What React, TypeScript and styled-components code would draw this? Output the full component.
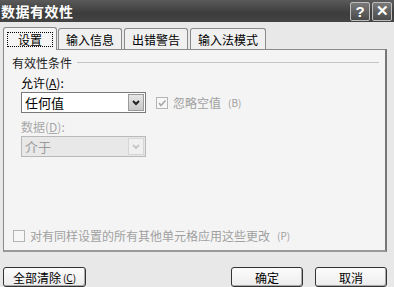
import React from "react";
import styled, { createGlobalStyle } from "styled-components";

const Global = createGlobalStyle`
  html, body { margin: 0; padding: 0; }
  body {
    width: 394px; height: 287px; overflow: hidden;
    background: #e8e8e8;
    font-family: "Noto Sans CJK SC", "Liberation Sans", sans-serif;
    font-size: 12px; color: #000;
  }
`;

const Dialog = styled.div`
  width: 394px; height: 287px;
  display: flex; flex-direction: column;
  background: #e8e8e8;
`;

const TitleBar = styled.div`
  height: 22px; box-sizing: border-box;
  display: flex; align-items: center; justify-content: space-between;
  padding: 0 2px 0 1px;
  background: linear-gradient(#5a5a5a, #3c3c3c 60%, #444);
`;

const Title = styled.div`
  color: #fff; font-weight: bold; font-size: 14px; letter-spacing: 0.5px;
  line-height: 22px;
`;

const TitleButtons = styled.div`
  display: flex; gap: 2px;
`;

const TitleBtn = styled.div`
  width: 20px; height: 19px; box-sizing: border-box;
  border: 1px solid #bdbdbd; border-radius: 2px;
  background: linear-gradient(#7a7a7a, #4a4a4a);
  color: #fff; display: flex; align-items: center; justify-content: center;
  font-family: "Liberation Sans", sans-serif; font-weight: bold; font-size: 15px;
`;

const Body = styled.div`
  flex: 1; display: flex; flex-direction: column;
  padding: 4px 7px 0 3px;
`;

const Tabs = styled.div`
  display: flex; align-items: flex-end; height: 23px;
  position: relative; z-index: 1;
`;

const Tab = styled.div<{ $active?: boolean }>`
  box-sizing: border-box;
  height: ${(p) => (p.$active ? "23px" : "21px")};
  margin-right: ${(p) => (p.$active ? "1px" : "2px")};
  padding: 0 ${(p) => (p.$active ? "3px" : "7px")};
  border: 1px solid #8a8a8a; border-bottom: none;
  border-radius: 3px 3px 0 0;
  background: ${(p) => (p.$active ? "#f4f4f4" : "#f0f0f0")};
  display: flex; align-items: center;
  margin-bottom: ${(p) => (p.$active ? "-1px" : "0")};
  font-size: 12px;
`;

const Focus = styled.span`
  border: 1px dotted #000; padding: 0 10px; line-height: 13px; display: inline-block;
`;

const Panel = styled.div`
  box-sizing: border-box;
  height: 203px;
  background: #f4f4f4;
  border: 1px solid #8a8a8a;
  border-right: 2px solid #777;
  border-bottom: 2px solid #999;
  display: flex; flex-direction: column;
  padding: 5px 6px 0 8px;
`;

const GroupHead = styled.div`
  display: flex; align-items: center; gap: 5px; height: 14px;
  color: #222;
`;

const GroupLine = styled.div`
  flex: 1; height: 1px; background: #c4c4c4;
`;

const Row = styled.div`
  display: flex; align-items: center; padding-left: 9px;
`;

const Label = styled.div<{ $disabled?: boolean }>`
  padding-left: 9px; margin-top: 8px; line-height: 12px;
  color: ${(p) => (p.$disabled ? "#a8a8a8" : "#000")};
  display: flex; align-items: center;
`;

const Select = styled.div<{ $disabled?: boolean }>`
  width: 125px; height: 21px; box-sizing: border-box;
  border: 1px solid ${(p) => (p.$disabled ? "#b8b8b8" : "#7a7a7a")};
  background: ${(p) => (p.$disabled ? "#e8e8e8" : "#fff")};
  display: flex; align-items: center; justify-content: space-between;
  padding: 0 1px 0 3px; margin-top: 3px;
  font-size: 13px;
  color: ${(p) => (p.$disabled ? "#9a9a9a" : "#000")};
`;

const DropBtn = styled.div<{ $disabled?: boolean }>`
  width: 16px; height: 17px; box-sizing: border-box;
  border: 1px solid ${(p) => (p.$disabled ? "#d6d6d6" : "#9a9a9a")};
  background: ${(p) => (p.$disabled ? "#f0f0f0" : "linear-gradient(#e6e6e6, #c8c8c8)")};
  display: flex; align-items: center; justify-content: center;
`;

const CheckWrap = styled.div<{ $disabled?: boolean; $m?: string }>`
  display: flex; align-items: center; gap: 5px;
  margin: ${(p) => p.$m || "0"};
  color: ${(p) => (p.$disabled ? "#a0a0a0" : "#000")};
`;

const Box = styled.div`
  width: 12px; height: 12px; box-sizing: border-box;
  border: 1px solid #b4b4b4; background: #f7f7f7;
  display: flex; align-items: center; justify-content: center;
`;

const Spacer = styled.div`flex: 1;`;

const Footer = styled.div`
  display: flex; align-items: center; padding: 9px 7px 0 3px;
`;

const Button = styled.div<{ $w: number }>`
  width: ${(p) => p.$w}px; height: 20px; box-sizing: border-box;
  border: 1px solid #333; border-radius: 3px;
  background: linear-gradient(#fcfcfc, #ececec);
  box-shadow: inset -1px -1px 0 #aaa;
  display: flex; align-items: center; justify-content: center;
  font-size: 12px;
`;

const Gap = styled.div<{ $w: number }>`width: ${(p) => p.$w}px;`;

const Small = styled.span`
  font-size: 10px; margin-left: 2px;
`;

const Chevron = ({ c }: { c: string }) => (
  <svg width="8" height="6" viewBox="0 0 8 6">
    <path d="M1 1 L4 4 L7 1" stroke={c} strokeWidth="2" fill="none" />
  </svg>
);

const Tick = () => (
  <svg width="10" height="10" viewBox="0 0 10 10">
    <path d="M2 5 L4 7.5 L8.5 2.5" stroke="#a8a8a8" strokeWidth="1.6" fill="none" />
  </svg>
);

export default function App() {
  return (
    <Dialog>
      <Global />
      <TitleBar>
        <Title>数据有效性</Title>
        <TitleButtons>
          <TitleBtn>?</TitleBtn>
          <TitleBtn>✕</TitleBtn>
        </TitleButtons>
      </TitleBar>
      <Body>
        <Tabs>
          <Tab $active><Focus>设置</Focus></Tab>
          <Tab>输入信息</Tab>
          <Tab>出错警告</Tab>
          <Tab>输入法模式</Tab>
        </Tabs>
        <Panel>
          <GroupHead>有效性条件<GroupLine /></GroupHead>
          <Label>允许(<u>A</u>):</Label>
          <Row>
            <Select>
              任何值
              <DropBtn><Chevron c="#222" /></DropBtn>
            </Select>
            <CheckWrap $disabled $m="3px 0 0 10px">
              <Box><Tick /></Box>
              忽略空值<Small>(B)</Small>
            </CheckWrap>
          </Row>
          <Label $disabled>数据(<u>D</u>):</Label>
          <Row>
            <Select $disabled>
              介于
              <DropBtn $disabled><Chevron c="#c8c8c8" /></DropBtn>
            </Select>
          </Row>
          <Spacer />
          <CheckWrap $disabled $m="0 0 6px 1px">
            <Box />
            对有同样设置的所有其他单元格应用这些更改<Small>(P)</Small>
          </CheckWrap>
        </Panel>
      </Body>
      <Footer>
        <Button $w={83}>全部清除<Small>(<u>C</u>)</Small></Button>
        <Spacer />
        <Button $w={72}>确定</Button>
        <Gap $w={12} />
        <Button $w={72}>取消</Button>
      </Footer>
    </Dialog>
  );
}
